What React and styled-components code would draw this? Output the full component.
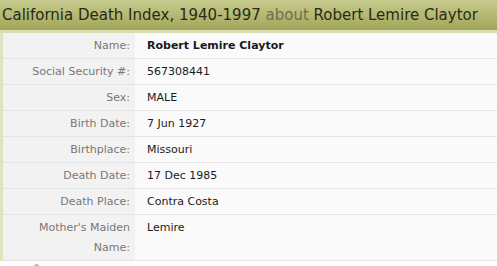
import React from "react";
import styled, { createGlobalStyle } from "styled-components";

const GlobalStyle = createGlobalStyle`
  html, body {
    margin: 0;
    padding: 0;
    background: #ffffff;
  }
  body {
    font-family: "DejaVu Sans", Verdana, sans-serif;
  }
`;

const Page = styled.div`
  width: 497px;
  height: 266px;
  overflow: hidden;
  background: #ffffff;
`;

const Header = styled.h1`
  margin: 0;
  height: 30px;
  padding: 0 0 0 2px;
  font-size: 15px;
  line-height: 30px;
  font-weight: normal;
  white-space: nowrap;
  color: #2a2a14;
  background: linear-gradient(#c7cb8e, #a1a658);
  border-bottom: 3px solid #d9ddb3;
`;

const Muted = styled.span`
  color: #6e6e4c;
`;

const Frame = styled.div`
  padding-left: 3px;
  background: #dfe4bf;
`;

const Table = styled.div`
  display: grid;
  grid-template-columns: 132px 1fr;
  font-size: 11px;
  line-height: 20px;
  background: #fafafa;
`;

const Cell = styled.div`
  padding: 3px 0 2px;
  border-bottom: 1px solid #e4e4e4;
`;

const Label = styled(Cell)`
  background: #f2f2f2;
  color: #777777;
  text-align: right;
  padding-left: 10px;
  padding-right: 5px;
`;

const Value = styled(Cell)`
  color: #1a1a1a;
  padding-left: 12px;
  font-weight: ${(p) => (p.$bold ? "bold" : "normal")};
`;

const Footer = styled.div`
  height: 6px;
  padding-left: 34px;
  display: flex;
  align-items: flex-end;
`;

const Dot = styled.span`
  width: 5px;
  height: 3px;
  border-radius: 3px 3px 0 0;
  background: #b9bf6a;
`;

const rows = [
  ["Name:", "Robert Lemire Claytor", true],
  ["Social Security #:", "567308441"],
  ["Sex:", "MALE"],
  ["Birth Date:", "7 Jun 1927"],
  ["Birthplace:", "Missouri"],
  ["Death Date:", "17 Dec 1985"],
  ["Death Place:", "Contra Costa"],
  ["Mother's Maiden Name:", "Lemire"],
];

export default function App() {
  return (
    <Page>
      <GlobalStyle />
      <Header>
        California Death Index, 1940-1997 <Muted>about</Muted> Robert Lemire
        Claytor
      </Header>
      <Frame>
        <Table>
          {rows.map(([label, value, bold]) => (
            <React.Fragment key={label}>
              <Label>{label}</Label>
              <Value $bold={bold}>{value}</Value>
            </React.Fragment>
          ))}
        </Table>
      </Frame>
      <Footer>
        <Dot />
      </Footer>
    </Page>
  );
}
